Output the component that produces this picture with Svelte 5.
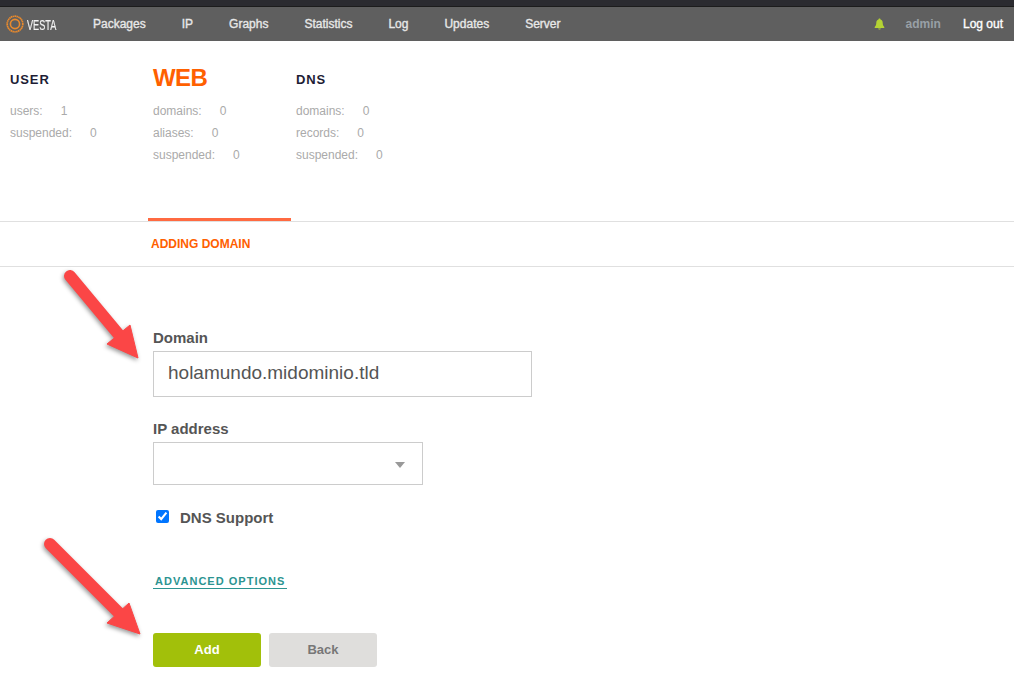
<script>
  const nav = ['Packages', 'IP', 'Graphs', 'Statistics', 'Log', 'Updates', 'Server'];
  const stats = [
    { title: 'USER', active: false, rows: [['users:', '1'], ['suspended:', '0']] },
    { title: 'WEB', active: true, rows: [['domains:', '0'], ['aliases:', '0'], ['suspended:', '0']] },
    { title: 'DNS', active: false, rows: [['domains:', '0'], ['records:', '0'], ['suspended:', '0']] }
  ];
</script>

<div class="page">
  <div class="strip"></div>
  <header class="topbar">
    <div class="logo">
      <svg width="18" height="18" viewBox="0 0 18 18" fill="none" stroke="#ea8a2c">
        <circle cx="9" cy="9" r="7.8" stroke-width="1.7" stroke-dasharray="1.5 .4" />
        <circle cx="9" cy="9" r="4.6" stroke-width="1.6" />
      </svg>
      <span class="logotext">VESTA</span>
    </div>
    <nav class="mainnav">
      {#each nav as item}
        <span class="navitem">{item}</span>
      {/each}
    </nav>
    <div class="right">
      <svg class="bell" width="11" height="12" viewBox="0 0 11 12">
        <path fill="#b5d334" d="M5.5 0.5c.6 0 1 .4 1 1 1.5.4 2.2 1.7 2.2 3.2 0 2 .5 3 1.6 4.3v1H.7v-1c1.1-1.300 1.600-2.300 1.600-4.300 0-1.500.7-2.800 2.200-3.200 0-.6.4-1 1-1zM4.200 10.500h2.600c0 .6-.6 1.100-1.300 1.100s-1.300-.5-1.300-1.100z" />
      </svg>
      <span class="admin">admin</span>
      <span class="logout">Log out</span>
    </div>
  </header>

  <section class="stats">
    {#each stats as col}
      <div class="col" class:active={col.active}>
        <h2 class="coltitle">{col.title}</h2>
        <ul class="rows">
          {#each col.rows as row}
            <li><span class="key">{row[0]}</span><span class="val">{row[1]}</span></li>
          {/each}
        </ul>
      </div>
    {/each}
  </section>

  <div class="subbar">
    <span class="subtitle">ADDING DOMAIN</span>
  </div>

  <form class="form">
    <label class="label" for="domain">Domain</label>
    <input id="domain" class="text" type="text" value="holamundo.midominio.tld" />

    <label class="label iplabel" for="ip">IP address</label>
    <div class="selectwrap">
      <select id="ip" class="select"></select>
    </div>

    <label class="check">
      <input type="checkbox" checked />
      <span class="checktext">DNS Support</span>
    </label>

    <div class="advwrap"><span class="adv">ADVANCED OPTIONS</span></div>

    <div class="buttons">
      <button type="button" class="btn add">Add</button>
      <button type="button" class="btn back">Back</button>
    </div>
  </form>

  <svg class="arrows" width="1014" height="673" viewBox="0 0 1014 673">
    <g fill="#fb4646" stroke="#fb4646" stroke-linejoin="round">
      <path d="M70 276 L120 336" stroke-width="12" stroke-linecap="round" />
      <polygon points="138,358 130,325 107,344" stroke-width="1" />
      <path d="M50 544 L120 614" stroke-width="12" stroke-linecap="round" />
      <polygon points="140,634 129,603 107,623" stroke-width="1" />
    </g>
  </svg>
</div>

<style>
  :global(body) {
    margin: 0;
    background: #fff;
  }
  .page {
    position: relative;
    width: 1014px;
    height: 673px;
    overflow: hidden;
    font-family: "Liberation Sans", Arial, sans-serif;
  }
  .strip {
    height: 7px;
    box-sizing: border-box;
    background: #2b2b30;
    border-bottom: 1px solid #1c1c1c;
  }
  .topbar {
    height: 34px;
    background: #5f5f5f;
    display: flex;
    align-items: center;
    padding: 0 11px 0 6px;
    font-size: 12px;
  }
  .logo {
    display: flex;
    align-items: center;
    gap: 3px;
    width: 87px;
  }
  .logotext {
    font-size: 15px;
    color: #f2f2f2;
    display: inline-block;
    transform: scaleX(0.61);
    transform-origin: left center;
    -webkit-text-stroke: 0.2px #f2f2f2;
  }
  .mainnav {
    display: flex;
    gap: 36px;
    flex: 1;
  }
  .navitem {
    color: #e8e8e8;
    -webkit-text-stroke: 0.35px #e8e8e8;
  }
  .right {
    display: flex;
    align-items: center;
  }
  .bell {
    margin-right: 21px;
  }
  .admin {
    color: #98a0a6;
    font-weight: 700;
    margin-right: 22px;
  }
  .logout {
    color: #fff;
    -webkit-text-stroke: 0.35px #fff;
  }
  .stats {
    height: 180px;
    display: flex;
  }
  .col {
    width: 143px;
    padding: 31px 0 0 5px;
    box-sizing: border-box;
  }
  .col:first-child {
    width: 148px;
    padding-left: 10px;
  }
  .col.active {
    border-bottom: 3px solid #ff6a41;
  }
  .coltitle {
    margin: 0;
    font-size: 13px;
    line-height: 16px;
    color: #1d1d35;
    letter-spacing: 0.9px;
  }
  .col.active .coltitle {
    font-size: 24px;
    color: #ff6000;
    letter-spacing: -0.6px;
    margin-top: -2px;
    padding-bottom: 2px;
  }
  .rows {
    list-style: none;
    margin: 12px 0 0;
    padding: 0;
    font-size: 12px;
    line-height: 22px;
    color: #aaa;
  }
  .key {
    margin-right: 18px;
  }
  .subbar {
    height: 46px;
    box-sizing: border-box;
    border-top: 1px solid #e0e0e0;
    border-bottom: 1px solid #e0e0e0;
    padding: 15px 0 0 151px;
    font-size: 12px;
    line-height: 14px;
    font-weight: 700;
    color: #ff6000;
  }
  .form {
    display: flex;
    flex-direction: column;
    align-items: flex-start;
    padding: 62px 0 0 153px;
  }
  .label {
    font-size: 15px;
    font-weight: 700;
    line-height: 17px;
    color: #555;
    margin-bottom: 5px;
  }
  .iplabel {
    margin-top: 23px;
    margin-bottom: 5px;
  }
  .text {
    width: 379px;
    height: 46px;
    box-sizing: border-box;
    border: 1px solid #ccc;
    padding: 0 14px 2px;
    margin: 0;
    font-family: inherit;
    font-size: 19px;
    color: #555;
    outline: none;
    border-radius: 0;
  }
  .selectwrap {
    position: relative;
    width: 270px;
    height: 43px;
  }
  .selectwrap::after {
    content: "";
    position: absolute;
    left: 242px;
    top: 20px;
    border-left: 5px solid transparent;
    border-right: 5px solid transparent;
    border-top: 6px solid #999;
  }
  .select {
    appearance: none;
    width: 100%;
    height: 100%;
    box-sizing: border-box;
    border: 1px solid #ccc;
    background: #fff;
    border-radius: 0;
    margin: 0;
  }
  .check {
    display: flex;
    align-items: flex-start;
    height: 20px;
    margin: 22px 0 0 3px;
    font-size: 15px;
    font-weight: 700;
    line-height: 20px;
    color: #555;
  }
  .check input {
    margin: 3px 11px 0 0;
    width: 13px;
    height: 13px;
  }
  .checktext {
    padding-top: 1px;
  }
  .advwrap {
    margin-top: 48px;
    line-height: 0;
  }
  .adv {
    display: inline-block;
    padding: 0 2px 0 2px;
    font-size: 11px;
    line-height: 13px;
    font-weight: 700;
    letter-spacing: 1.02px;
    color: #2c9491;
    border-bottom: 1px solid #2c9491;
  }
  .buttons {
    display: flex;
    gap: 8px;
    margin-top: 44px;
  }
  .btn {
    width: 108px;
    height: 34px;
    border: 0;
    border-radius: 3px;
    padding: 0 0 2px;
    font-family: inherit;
    font-size: 13px;
    font-weight: 700;
  }
  .add {
    background: #a2c00a;
    color: #fff;
  }
  .back {
    background: #dfdedc;
    color: #777;
  }
  .arrows {
    position: absolute;
    left: 0;
    top: 0;
    pointer-events: none;
    filter: drop-shadow(-1px 2px 2px rgba(0, 0, 0, 0.4));
  }
</style>
